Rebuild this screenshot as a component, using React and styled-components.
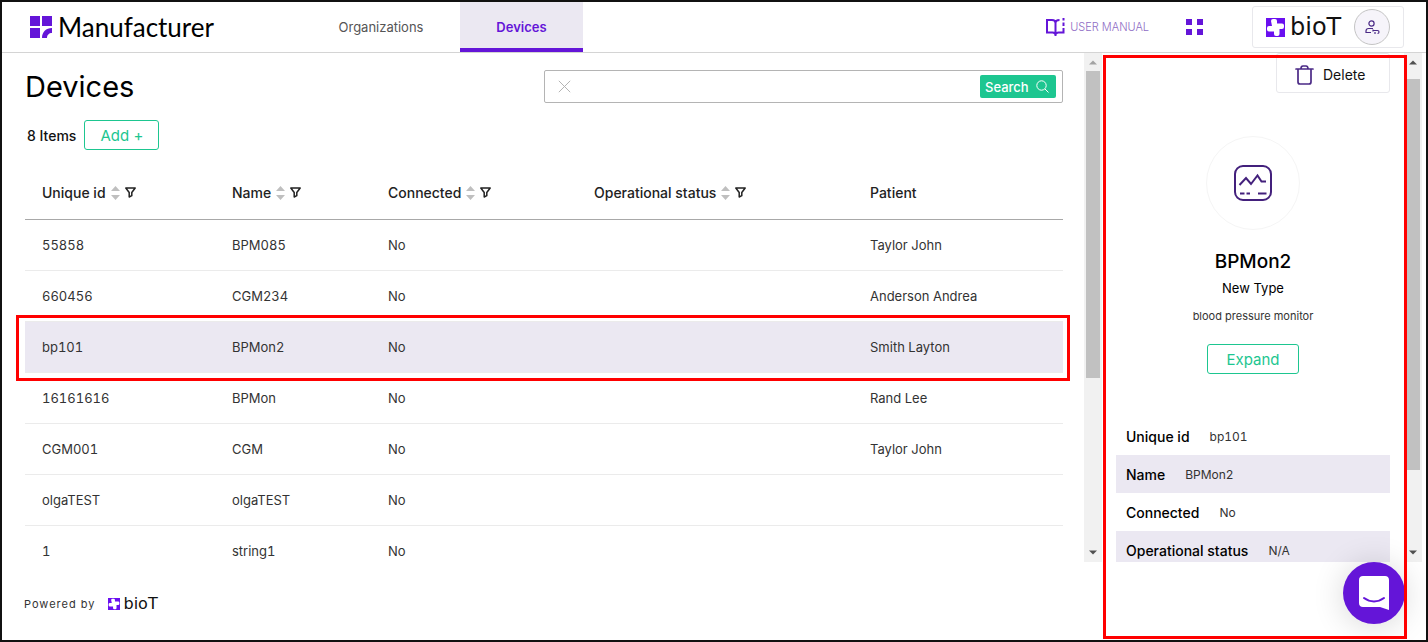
import React, { useState } from 'react';
import styled, { createGlobalStyle } from 'styled-components';

const GlobalStyle = createGlobalStyle`
  * {
    box-sizing: border-box;
  }

  body {
    margin: 0;
    background: #fff;
    color: #000;
    font-family: Inter, sans-serif;
    font-size: 13px;
  }

  button, input {
    font-family: inherit;
  }
`;

// Page frame
const Page = styled.div`
  display: flex;
  flex-direction: column;
  height: 100vh;
  min-height: 480px;
  overflow: hidden;
  border: 2px solid #111;
`;

// Header
const Header = styled.header`
  display: flex;
  flex: none;
  align-items: center;
  height: 51px;
  padding: 0 22px 0 28px;
  border-bottom: 1px solid #d4d4d4;
`;

const Brand = styled.a`
  display: flex;
  align-items: center;
  gap: 6px;
  width: 272px;
  color: #000;
  font-family: Lato, sans-serif;
  font-size: 26px;
  line-height: 32px;
  text-decoration: none;
`;

const Nav = styled.nav`
  display: flex;
  flex: 1;
  align-self: stretch;
`;

const NavLink = styled.a`
  display: flex;
  align-items: center;
  justify-content: center;
  width: ${props => (props.$active ? '123px' : '158px')};
  padding-top: 4px;
  border-bottom: 4px solid ${props => (props.$active ? '#6415d8' : 'transparent')};
  background: ${props => (props.$active ? '#ebe8f2' : 'transparent')};
  color: ${props => (props.$active ? '#6415d8' : '#555')};
  font-weight: ${props => (props.$active ? 600 : 400)};
  text-decoration: none;
`;

const ManualLink = styled.a`
  display: flex;
  align-items: center;
  gap: 5px;
  margin-right: 37px;
  color: #8e6bc4;
  font-size: 11px;
  font-weight: 300;
  text-decoration: none;
`;

const IconButton = styled.button`
  display: flex;
  padding: 0;
  border: 0;
  background: none;
  cursor: pointer;
`;

const Account = styled.div`
  display: flex;
  align-items: center;
  justify-content: space-between;
  width: 152px;
  height: 42px;
  margin-left: 49px;
  padding: 0 13px;
  border: 1px solid #e8e8ec;
  border-radius: 3px;
`;

const Avatar = styled.button`
  display: flex;
  align-items: center;
  justify-content: center;
  width: 36px;
  height: 36px;
  padding: 0;
  border: 1px solid #c4c4c4;
  border-radius: 50%;
  background: #f6f4fa;
`;

const LogoBox = styled.span`
  display: flex;
  align-items: center;
  gap: ${props => (props.$small ? '3px' : '5px')};
  color: #111;
  font-family: "DejaVu Sans", sans-serif;
  font-size: ${props => (props.$small ? '16px' : '24px')};
  font-weight: 400;
  line-height: 1;
`;

// Body
const Body = styled.div`
  display: flex;
  flex: 1;
  min-height: 0;
  padding-right: 4px;
`;

const Main = styled.main`
  flex: 1;
  min-width: 0;
  overflow: hidden;
  padding: 17px 21px 0 23px;
`;

const TitleRow = styled.div`
  display: flex;
  align-items: center;
  justify-content: space-between;
`;

const Title = styled.h1`
  margin: 0;
  font-size: 29px;
  font-weight: 400;
  line-height: 33px;
`;

const SearchBox = styled.form`
  display: flex;
  align-items: center;
  width: 50%;
  height: 33px;
  padding: 0 6px 0 13px;
  border: 1px solid #b4b4b4;
  border-radius: 2px;
`;

const SearchInput = styled.input`
  flex: 1;
  min-width: 0;
  height: 24px;
  border: 0;
  outline: 0;
`;

const SearchButton = styled.button`
  display: flex;
  align-items: center;
  justify-content: space-between;
  width: 76px;
  height: 23px;
  padding: 0 7px 0 5px;
  border: 0;
  border-radius: 2px;
  background: #1dc690;
  color: #fff;
  font-size: 13px;
  font-weight: 500;
`;

const Toolbar = styled.div`
  display: flex;
  align-items: center;
  gap: 8px;
  margin-top: 17px;
  padding-left: 2px;
  color: #111;
  font-size: 14px;
  font-weight: 500;
`;

const OutlineButton = styled.button`
  flex: none;
  width: ${props => props.$width};
  height: 30px;
  padding: 0;
  border: 1px solid #1dc690;
  border-radius: 3px;
  background: #fff;
  color: #1dc690;
  font-size: 15px;
`;

// Devices table
const Table = styled.table`
  width: 100%;
  margin-top: 18px;
  border-collapse: separate;
  border-spacing: 0;
  table-layout: fixed;
  font-variant-numeric: tabular-nums;
`;

const HeadCell = styled.th`
  width: ${props => props.$width};
  height: 52px;
  padding: 0 0 2px 17px;
  border-bottom: 1px solid #a8a8a8;
  color: #222;
  font-size: 14px;
  font-weight: 500;
  text-align: left;
  white-space: nowrap;
`;

const HeadContent = styled.span`
  display: flex;
  align-items: center;
  gap: 5px;
`;

const Cell = styled.td`
  height: 51px;
  padding: 0 0 0 17px;
  border-bottom: 1px solid #ebebeb;
  color: #333;
  cursor: pointer;
`;

const Row = styled.tr`
  position: relative;
  background: ${props => (props.$selected ? '#ebe8f2' : 'transparent')};

  ${Cell}:first-child::after {
    content: '';
    position: absolute;
    inset: -7px -7px -8px -9px;
    display: ${props => (props.$selected ? 'block' : 'none')};
    border: 3px solid #f00;
    pointer-events: none;
  }
`;

// Scroll tracks
const Track = styled.div`
  display: flex;
  flex: none;
  flex-direction: column;
  align-items: center;
  justify-content: space-between;
  width: 18px;
  padding: 7px 0;
  background: #f1f1f1;
`;

const Thumb = styled.div`
  width: 14px;
  margin: ${props => props.$top} 0 auto;
  height: ${props => props.$size};
  background: #c1c1c1;
`;

// Details panel
const Panel = styled.aside`
  position: relative;
  flex: none;
  width: 302px;
`;

const PanelMark = styled.div`
  position: absolute;
  z-index: 1;
  top: 2px;
  right: -3px;
  bottom: -77px;
  left: 1px;
  border: 3px solid #f00;
  pointer-events: none;
`;

const PanelScroll = styled.div`
  display: flex;
  flex-direction: column;
  align-items: center;
  height: 100%;
  overflow: hidden;
  padding: 0 14px;
`;

const DeleteButton = styled.button`
  display: flex;
  flex: none;
  align-items: center;
  align-self: flex-end;
  gap: 9px;
  width: 114px;
  height: 40px;
  padding: 3px 0 0 18px;
  border: 1px solid #e8e8ec;
  border-radius: 3px;
  background: #fff;
  color: #111;
  font-size: 14px;
`;

const DeviceCircle = styled.div`
  display: flex;
  flex: none;
  align-items: center;
  justify-content: center;
  width: 94px;
  height: 94px;
  margin-top: 43px;
  border: 1px solid #f5f5f5;
  border-radius: 50%;
`;

const DeviceName = styled.h2`
  margin: 20px 0 0;
  font-size: 19px;
  font-weight: 500;
  line-height: 24px;
`;

const DeviceType = styled.p`
  margin: 5px 0 0;
  line-height: 18px;
`;

const DeviceText = styled.p`
  margin: 11px 0 20px;
  font-size: 11px;
  line-height: 16px;
  color: #333;
`;

const Fields = styled.dl`
  flex: none;
  width: 100%;
  margin: 43px 0 0;
  font-variant-numeric: tabular-nums;
`;

const Field = styled.div`
  display: flex;
  align-items: center;
  gap: 20px;
  height: 38px;
  padding: 0 10px;
  background: ${props => (props.$shaded ? '#ebe8f2' : 'transparent')};
`;

const FieldName = styled.dt`
  font-size: 14px;
  font-weight: 500;
`;

const FieldValue = styled.dd`
  margin: 0;
  color: #333;
  font-size: 12px;
`;

// Footer
const Footer = styled.footer`
  display: flex;
  flex: none;
  align-items: center;
  gap: 13px;
  height: 78px;
  padding: 6px 22px 0;
  color: #333;
  font-size: 11px;
  letter-spacing: 1px;

  ${LogoBox} {
    letter-spacing: normal;
  }
`;

const ChatButton = styled.button`
  position: fixed;
  right: 23px;
  bottom: 18px;
  display: flex;
  align-items: center;
  justify-content: center;
  width: 62px;
  height: 62px;
  padding: 0;
  border: 0;
  border-radius: 50%;
  background: #6415d8;
  box-shadow: 0 2px 32px rgba(0, 0, 0, 0.16);
`;

const columns = [
  { key: 'id', label: 'Unique id', width: '190px', sortable: true },
  { key: 'name', label: 'Name', width: '156px', sortable: true },
  { key: 'connected', label: 'Connected', width: '206px', sortable: true },
  { key: 'status', label: 'Operational status', width: '276px', sortable: true },
  { key: 'patient', label: 'Patient', width: 'auto' },
];

const devices = [
  { id: '55858', name: 'BPM085', connected: 'No', patient: 'Taylor John' },
  { id: '660456', name: 'CGM234', connected: 'No', patient: 'Anderson Andrea' },
  { id: 'bp101', name: 'BPMon2', connected: 'No', patient: 'Smith Layton' },
  { id: '16161616', name: 'BPMon', connected: 'No', patient: 'Rand Lee' },
  { id: 'CGM001', name: 'CGM', connected: 'No', patient: 'Taylor John' },
  { id: 'olgaTEST', name: 'olgaTEST', connected: 'No' },
  { id: '1', name: 'string1', connected: 'No' },
];

const BrandIcon = () => (
  <svg width="22" height="22" viewBox="0 0 22 22" fill="#6415d8" aria-hidden="true">
    <path d="M0 0h10v10H0zM12 0h10v10H12zM0 12h10v10H0z" />
    <path d="M22 12v5c-3 0-5 2-5 5h-5c0-6 4-10 10-10z" />
  </svg>
);

const BioLogo = ({ small }) => {
  const size = small ? 12 : 19;
  return (
    <LogoBox $small={small}>
      <svg width={size} height={size} viewBox="0 0 19 19" aria-hidden="true">
        <path d="M0 0h19v19H0z" fill="#6a0ff0" />
        <path
          d="M5 3q0-2 2-2h2q2 0 2 2v2.500h5q2 0 2 2V9q0 2-2 2h-2.500v5q0 2-2 2H10q-2 0-2-2v-2.500H3q-2 0-2-2V10q0-2 2-2h3z"
          fill="#fff"
        />
      </svg>
      <span>bioT</span>
    </LogoBox>
  );
};

const BookIcon = () => (
  <svg width="19" height="19" viewBox="0 0 19 19" fill="none" stroke="#6415d8" strokeWidth="2" aria-hidden="true">
    <path d="M9.500 18V5C9.500 3 8 2 6 2H1v12.500h5.500c1.600 0 3 .8 3 2.500 0-1.700 1.400-2.500 3-2.500H17.500V10M9.500 5c0-2 1.500-3 4-3" />
    <path d="M17.500 0v2.500M17.500 4.500v3.500" />
  </svg>
);

const AppsIcon = () => (
  <svg width="17" height="16" viewBox="0 0 17 16" fill="#6415d8" aria-hidden="true">
    <path d="M0 0h6v6H0zM11 0h6v6h-6zM0 10h6v6H0zM11 10h6v6h-6z" />
  </svg>
);

const UserIcon = () => (
  <svg width="15" height="15" viewBox="0 0 15 15" fill="none" stroke="#4b2a86" strokeWidth="1.200" aria-hidden="true">
    <circle cx="6.500" cy="3.500" r="2.600" />
    <path d="M8 8.500H3.500C2 8.500 1 9.500 1 11v1.500h5" />
    <path d="M8 10.500h4.500c2 0 2 3 0 3M8 9.500v2M10 12v2" />
  </svg>
);

const SortIcon = () => (
  <svg width="9" height="14" viewBox="0 0 9 14" fill="#bfbfbf" aria-hidden="true">
    <path d="M4.500 0L9 5H0zM4.500 14L9 9H0z" />
  </svg>
);

const FilterIcon = () => (
  <svg width="11" height="11" viewBox="0 0 11 11" fill="none" stroke="#222" strokeWidth="1.500" strokeLinejoin="round" aria-hidden="true">
    <path d="M.8 1h9.400L6.800 5.500v3.200L4.200 10V5.500z" />
  </svg>
);

const CloseIcon = () => (
  <svg width="13" height="13" viewBox="0 0 13 13" stroke="#b4b4b4" aria-hidden="true">
    <path d="M.8.8l11.400 11.400M12.200.8L.8 12.200" />
  </svg>
);

const SearchIcon = () => (
  <svg width="13" height="13" viewBox="0 0 13 13" fill="none" stroke="#fff" aria-hidden="true">
    <circle cx="5.500" cy="5.500" r="4.700" />
    <path d="M9 9l3.500 3.500" />
  </svg>
);

const TrashIcon = () => (
  <svg width="19" height="20" viewBox="0 0 19 20" fill="none" stroke="#4b2a86" strokeWidth="1.700" strokeLinecap="round" aria-hidden="true">
    <path d="M1 4h17M6 4c0-2 .5-3 2-3h3c1.500 0 2 1 2 3M3 4v13c0 1.500.6 2 2 2h9c1.400 0 2-.5 2-2V4" />
  </svg>
);

const MonitorIcon = () => (
  <svg width="38" height="36" viewBox="0 0 38 36" fill="none" stroke="#43207c" strokeWidth="2" aria-hidden="true">
    <rect x="1" y="1" width="36" height="34" rx="8" />
    <path d="M5.500 20l6.500-7 5 6 6.500-8.500 4 6H32M6 28.500h4.500M12.500 28.500H16M24 28.500h8.500" />
  </svg>
);

const ChatIcon = () => (
  <svg width="30" height="34" viewBox="0 0 30 34" fill="none" aria-hidden="true">
    <path d="M4 0h22c2.500 0 4 1.500 4 4v30l-9-3H4c-2.500 0-4-1.500-4-4V4c0-2.500 1.500-4 4-4z" fill="#fff" />
    <path d="M5 22c6 4.500 14 4.500 20 0" stroke="#6415d8" strokeWidth="2" strokeLinecap="round" />
  </svg>
);

const Arrow = ({ down, color = '#505050' }) => (
  <svg width="8" height="5" viewBox="0 0 8 5" fill={color} aria-hidden="true">
    <path d={down ? 'M0 .5h8l-4 4z' : 'M0 4.500h8l-4-4z'} />
  </svg>
);

const ScrollTrack = ({ top, size, upColor }) => (
  <Track>
    <Arrow color={upColor} />
    <Thumb $top={top} $size={size} />
    <Arrow down />
  </Track>
);

const App = () => {
  const [selectedId, setSelectedId] = useState('bp101');
  const [query, setQuery] = useState('');
  const selected = devices.find(device => device.id === selectedId);

  const fields = [
    ['Unique id', selected.id],
    ['Name', selected.name],
    ['Connected', selected.connected],
    ['Operational status', 'N/A'],
  ];

  return (
    <Page>
      <GlobalStyle />
      <Header>
        <Brand href="#">
          <BrandIcon />
          Manufacturer
        </Brand>
        <Nav>
          <NavLink href="#organizations">Organizations</NavLink>
          <NavLink href="#devices" $active>Devices</NavLink>
        </Nav>
        <ManualLink href="#manual">
          <BookIcon />
          USER MANUAL
        </ManualLink>
        <IconButton aria-label="Apps"><AppsIcon /></IconButton>
        <Account>
          <BioLogo />
          <Avatar aria-label="Account"><UserIcon /></Avatar>
        </Account>
      </Header>

      <Body>
        <Main>
          <TitleRow>
            <Title>Devices</Title>
            <SearchBox onSubmit={e => e.preventDefault()}>
              <IconButton type="button" aria-label="Clear" onClick={() => setQuery('')}>
                <CloseIcon />
              </IconButton>
              <SearchInput aria-label="Search devices" value={query} onChange={e => setQuery(e.target.value)} />
              <SearchButton type="submit">
                Search
                <SearchIcon />
              </SearchButton>
            </SearchBox>
          </TitleRow>
          <Toolbar>
            <span>8 Items</span>
            <OutlineButton $width="75px">Add +</OutlineButton>
          </Toolbar>

          <Table>
            <thead>
              <tr>
                {columns.map(column => (
                  <HeadCell key={column.key} $width={column.width}>
                    <HeadContent>
                      {column.label}
                      {column.sortable && (
                        <>
                          <SortIcon />
                          <FilterIcon />
                        </>
                      )}
                    </HeadContent>
                  </HeadCell>
                ))}
              </tr>
            </thead>
            <tbody>
              {devices.map(device => (
                <Row key={device.id} $selected={device.id === selectedId} onClick={() => setSelectedId(device.id)}>
                  {columns.map(column => (
                    <Cell key={column.key}>{device[column.key]}</Cell>
                  ))}
                </Row>
              ))}
            </tbody>
          </Table>
        </Main>
        <ScrollTrack top="6px" size="62%" upColor="#a3a3a3" />

        <Panel>
          <PanelMark />
          <PanelScroll>
            <DeleteButton>
              <TrashIcon />
              Delete
            </DeleteButton>
            <DeviceCircle><MonitorIcon /></DeviceCircle>
            <DeviceName>{selected.name}</DeviceName>
            <DeviceType>New Type</DeviceType>
            <DeviceText>blood pressure monitor</DeviceText>
            <OutlineButton $width="92px">Expand</OutlineButton>
            <Fields>
              {fields.map(([label, value], index) => (
                <Field key={label} $shaded={index % 2 === 1}>
                  <FieldName>{label}</FieldName>
                  <FieldValue>{value}</FieldValue>
                </Field>
              ))}
            </Fields>
          </PanelScroll>
        </Panel>
        <ScrollTrack top="14px" size="79%" />
      </Body>

      <Footer>
        <span>Powered by</span>
        <BioLogo small />
      </Footer>
      <ChatButton aria-label="Open chat"><ChatIcon /></ChatButton>
    </Page>
  );
};

export default App;
